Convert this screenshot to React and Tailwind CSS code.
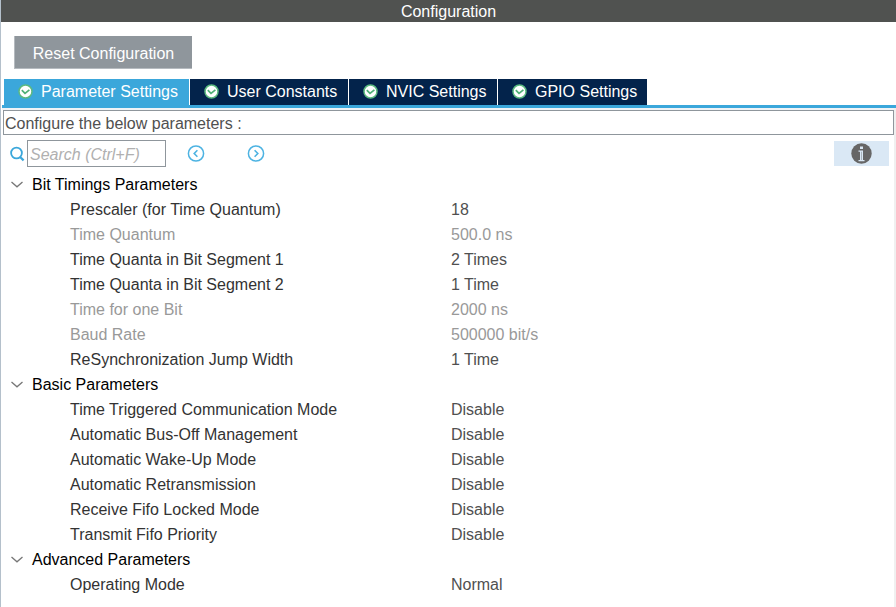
import React, { useState } from "react";

const TABS = [
  { label: "Parameter Settings", width: "w-[185px]" },
  { label: "User Constants", width: "w-[158px]" },
  { label: "NVIC Settings", width: "w-[148px]" },
  { label: "GPIO Settings", width: "w-[149px]" },
];

const GROUPS = [
  {
    title: "Bit Timings Parameters",
    rows: [
      { name: "Prescaler (for Time Quantum)", value: "18" },
      { name: "Time Quantum", value: "500.0 ns", readOnly: true },
      { name: "Time Quanta in Bit Segment 1", value: "2 Times" },
      { name: "Time Quanta in Bit Segment 2", value: "1 Time" },
      { name: "Time for one Bit", value: "2000 ns", readOnly: true },
      { name: "Baud Rate", value: "500000 bit/s", readOnly: true },
      { name: "ReSynchronization Jump Width", value: "1 Time" },
    ],
  },
  {
    title: "Basic Parameters",
    rows: [
      { name: "Time Triggered Communication Mode", value: "Disable" },
      { name: "Automatic Bus-Off Management", value: "Disable" },
      { name: "Automatic Wake-Up Mode", value: "Disable" },
      { name: "Automatic Retransmission", value: "Disable" },
      { name: "Receive Fifo Locked Mode", value: "Disable" },
      { name: "Transmit Fifo Priority", value: "Disable" },
    ],
  },
  {
    title: "Advanced Parameters",
    rows: [{ name: "Operating Mode", value: "Normal" }],
  },
];

function CheckBadge() {
  return (
    <svg className="size-4 shrink-0" viewBox="0 0 16 16" aria-hidden="true">
      <circle cx="7.5" cy="7.5" r="6.5" fill="#fff" stroke="#5cba80" strokeWidth="1.5" />
      <path d="M3.8 6.2 7 9.4l4.4-3.6" fill="none" stroke="#4fb075" strokeWidth="1.7" />
    </svg>
  );
}

function SearchIcon() {
  return (
    <svg className="size-4 shrink-0" viewBox="0 0 16 16" fill="none" stroke="#3ba7db" aria-hidden="true">
      <circle cx="7.5" cy="7" r="5.4" strokeWidth="1.8" />
      <path d="m10.8 10.8 3.8 3.6" strokeWidth="2.2" />
    </svg>
  );
}

function CircleArrow({ d }) {
  return (
    <svg className="size-[18px]" viewBox="0 0 18 18" fill="none" stroke="#4db3e2" aria-hidden="true">
      <circle cx="9" cy="8.5" r="7.6" strokeWidth="1.5" />
      <path d={d} strokeWidth="1.6" />
    </svg>
  );
}

function InfoIcon() {
  return (
    <svg className="size-[21px]" viewBox="0 0 21 21" aria-hidden="true">
      <circle cx="10.5" cy="10.5" r="10.2" fill="#666" />
      <path d="M9 3.5h3v2.5H9z M7.5 7.5H12v9.5h1.5v1.2h-6V17H9V8.7H7.5z" fill="#dae8f5" />
      <path d="M10.5 8.7v8.3" stroke="#a9b3bb" strokeWidth="1" />
    </svg>
  );
}

function Chevron({ open }) {
  return (
    <svg className={open ? "h-2 w-3" : "h-2 w-3 -rotate-90"} viewBox="0 0 12 8" fill="none" stroke="#777" strokeWidth="1.3" aria-hidden="true">
      <path d="M.5 1 6 5.8 11.5 1" />
    </svg>
  );
}

function Group({ title, rows }) {
  const [open, setOpen] = useState(true);
  return (
    <tbody>
      <tr className="h-[25px]">
        <th colSpan={2} scope="rowgroup" className="p-0 text-left font-normal text-black">
          <button
            type="button"
            aria-expanded={open}
            onClick={() => setOpen(!open)}
            className="flex h-[25px] items-center gap-[9px] pl-2"
          >
            <Chevron open={open} />
            {title}
          </button>
        </th>
      </tr>
      {open &&
        rows.map((row) => (
          <tr key={row.name} className={row.readOnly ? "h-[25px] text-[#999]" : "h-[25px] text-[#333]"}>
            <th scope="row" className="p-0 pl-[67px] text-left font-normal">
              {row.name}
            </th>
            <td className={row.readOnly ? "p-0" : "p-0 text-[#505050]"}>{row.value}</td>
          </tr>
        ))}
    </tbody>
  );
}

export default function App() {
  const [active, setActive] = useState(0);
  return (
    <div className="min-h-screen border-l border-[#b4c0cb] bg-white font-['Liberation_Sans',Arial,sans-serif] text-base leading-5">
      <header className="flex h-[22px] items-end justify-center bg-[#505250] text-white">
        <h1>Configuration</h1>
      </header>

      <div className="px-[13px] pt-[14px] pb-[10px]">
        <button
          type="button"
          className="block h-[33px] w-[178px] border-b border-l border-[#b5babf] bg-[#8f969c] pt-[3px] text-center text-white"
        >
          Reset Configuration
        </button>
      </div>

      <div role="tablist" className="ml-px flex gap-px border-b-3 border-[#3ba7db] pl-[2px]">
        {TABS.map((tab, i) => (
          <button
            key={tab.label}
            type="button"
            role="tab"
            aria-selected={i === active}
            onClick={() => setActive(i)}
            className={`flex h-[26px] items-center gap-[7px] pl-[14px] pb-px text-white ${tab.width} ${
              i === active ? "bg-[#3ba7db]" : "bg-[#03234b]"
            }`}
          >
            <CheckBadge />
            {tab.label}
          </button>
        ))}
      </div>

      <main className="ml-px min-h-[499px] border-r-2 border-[#f0f0f0]">
        <div className="border-t-2 border-[#f0f3f6] pl-px">
          <p className="h-[25px] border border-[#8f969c] pt-px pl-px text-[#505050] leading-6">
            Configure the below parameters :
          </p>
        </div>

        <div className="flex h-[37px] items-center pr-[5px] pl-[7px]">
          <label htmlFor="search" aria-label="Search">
            <SearchIcon />
          </label>
          <input
            id="search"
            type="text"
            placeholder="Search (Ctrl+F)"
            className="ml-[2px] h-[27px] w-[139px] border border-[#8f969c] px-[2px] pt-[3px] italic outline-none placeholder:text-[#b0b0b0]"
          />
          <button type="button" aria-label="Previous match" className="ml-[21px]">
            <CircleArrow d="M10.4 5.3 7.2 8.5l3.2 3.2" />
          </button>
          <button type="button" aria-label="Next match" className="ml-[42px]">
            <CircleArrow d="M7.6 5.3 10.8 8.5l-3.2 3.2" />
          </button>
          <button
            type="button"
            aria-label="Parameter information"
            className="ml-auto flex h-[25px] w-[55px] items-center justify-center bg-[#dae8f5]"
          >
            <InfoIcon />
          </button>
        </div>

        <div className="pl-px">
          <table className="w-full table-fixed border-collapse">
            <colgroup>
              <col className="w-[448px]" />
              <col />
            </colgroup>
            {GROUPS.map((group) => (
              <Group key={group.title} {...group} />
            ))}
          </table>
        </div>
      </main>
    </div>
  );
}
